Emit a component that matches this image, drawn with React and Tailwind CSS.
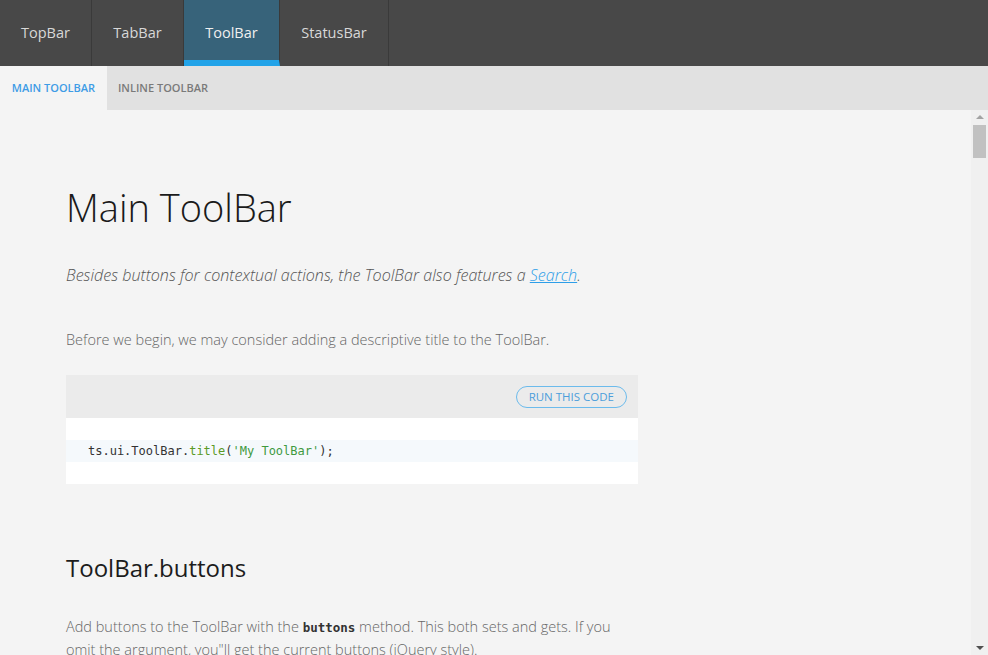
import React from 'react';

const tabs = ['TopBar', 'TabBar', 'ToolBar', 'StatusBar'];
const tabWidths = ['w-[92px]', 'w-[92px]', 'w-[96px]', 'w-[109px]'];

export default function App() {
  return (
    <div className="h-[655px] w-[988px] overflow-hidden flex flex-col bg-[#f4f4f4] font-['Open_Sans',sans-serif]">
      {/* barre du haut */}
      <div className="h-[66px] bg-[#484848] flex shrink-0">
        {tabs.map((t, i) => {
          const actif = t === 'ToolBar';
          return (
            <div
              key={t}
              className={`${tabWidths[i]} h-full flex items-center justify-center border-r border-[#3a3a3a] text-[14.5px] ${
                actif ? 'bg-[#37637a] text-[#f0f0f0] border-b-[6px] border-b-[#22a3e8] pt-[5px]' : 'text-[#d8d8d8] pb-[1px]'
              }`}
            >
              {t}
            </div>
          );
        })}
      </div>

      {/* sous-onglets */}
      <div className="h-[44px] bg-[#e1e1e1] flex shrink-0 text-[11px] font-semibold">
        <div className="w-[107px] bg-[#f4f4f4] text-[#3e9ce6] flex items-center justify-center">MAIN TOOLBAR</div>
        <div className="px-[11px] text-[#7a7a7a] flex items-center">INLINE TOOLBAR</div>
      </div>

      <div className="flex flex-1 min-h-0">
        <div className="flex-1 pl-[66px] pt-[73px]">
          <h1 className="text-[38px] leading-[48px] text-[#1a1a1a] font-light">Main ToolBar</h1>
          <p className="mt-[32px] text-[16.1px] leading-[24px] italic font-light text-[#555]">
            Besides buttons for contextual actions, the ToolBar also features a{' '}
            <a className="text-[#2d9ee8] underline">Search</a>.
          </p>
          <p className="mt-[42px] text-[14.5px] leading-[22px] font-light text-[#666]">
            Before we begin, we may consider adding a descriptive title to the ToolBar.
          </p>

          <div className="mt-[24px] w-[572px]">
            <div className="h-[43px] bg-[#ebebeb] flex items-center justify-end pr-[11px]">
              <button className="h-[22px] px-[12px] rounded-full border border-[#6cbbec] text-[#4c9edb] text-[11.5px] leading-none">
                RUN THIS CODE
              </button>
            </div>
            <div className="bg-white pt-[22px] pb-[22px]">
              <div className="h-[22px] bg-[#f5f9fc] pl-[22px] flex items-center font-['DejaVu_Sans_Mono',monospace] text-[12px] text-[#333]">
                ts.ui.ToolBar.<span className="text-[#5b9a26]">title</span>(
                <span className="text-[#3f9a3f]">'My ToolBar'</span>);
              </div>
            </div>
          </div>

          <h2 className="mt-[68px] text-[24px] leading-[32px] text-[#1c1c1c] font-normal">ToolBar.buttons</h2>
          <p className="mt-[32px] w-[572px] text-[14.5px] leading-[22px] font-light text-[#666]">
            Add buttons to the ToolBar with the{' '}
            <code className="font-['DejaVu_Sans_Mono',monospace] text-[12.5px] font-semibold text-[#333]">buttons</code>{' '}
            method. This both sets and gets. If you omit the argument, you"ll get the current buttons (jQuery style).
          </p>
        </div>

        {/* barre de défilement */}
        <div className="w-[17px] bg-[#f0f0f0] flex flex-col items-center shrink-0">
          <div className="h-[14px] flex items-center justify-center">
            <div className="w-0 h-0 border-l-[4px] border-r-[4px] border-b-[4px] border-l-transparent border-r-transparent border-b-[#a3a3a3]" />
          </div>
          <div className="w-[13px] h-[33px] bg-[#c1c1c1] mt-[1px]" />
          <div className="flex-1" />
          <div className="h-[15px] flex items-center justify-center">
            <div className="w-0 h-0 border-l-[4px] border-r-[4px] border-t-[4px] border-l-transparent border-r-transparent border-t-[#505050]" />
          </div>
        </div>
      </div>
    </div>
  );
}
